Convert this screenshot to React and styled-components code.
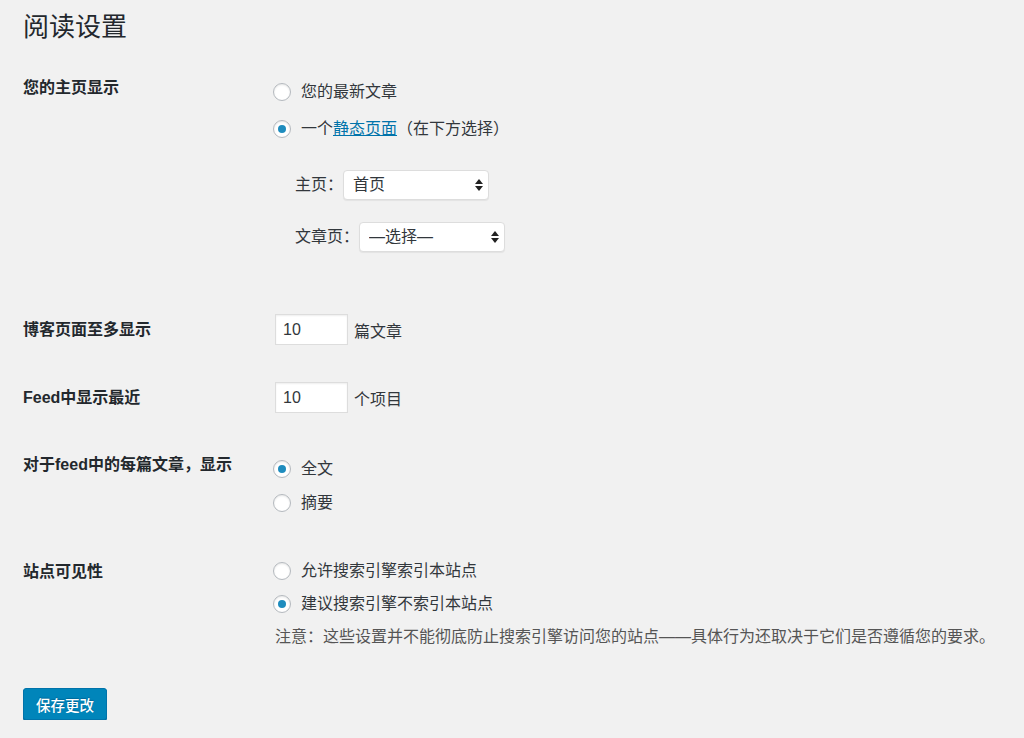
import styled, { createGlobalStyle } from "styled-components";

const GlobalStyle = createGlobalStyle`
  body {
    margin: 0;
    background: #f1f1f1;
    color: #23282d;
    font-family: "Liberation Sans", "Noto Sans CJK SC", sans-serif;
    font-size: 16px;
  }
`;

const Page = styled.div`
  padding: 10px 0 0 23px;
`;

const Title = styled.h1`
  margin: 0;
  font-size: 26px;
  font-weight: 400;
  line-height: 34px;
  color: #23282d;
`;

const Row = styled.div`
  display: grid;
  grid-template-columns: 250px 1fr;
`;

const Th = styled.div`
  padding-top: ${(p) => p.$top}px;
  font-weight: 700;
  line-height: 22px;
  color: #23282d;
`;

const Td = styled.div`
  padding-top: ${(p) => p.$top}px;
  padding-bottom: ${(p) => p.$bottom}px;
  color: #32373c;
`;

const Options = styled.div`
  display: flex;
  flex-direction: column;
  gap: ${(p) => p.$gap}px;
`;

const Option = styled.label`
  display: flex;
  align-items: center;
  height: 22px;
  line-height: 22px;
`;

const Radio = styled.input.attrs({ type: "radio", readOnly: true })`
  appearance: none;
  margin: 0 10px 0 0;
  width: 18px;
  height: 18px;
  border: 1px solid #b4b9be;
  border-radius: 50%;
  background: #fff;
  box-shadow: inset 0 1px 2px rgba(0, 0, 0, 0.1);
  box-sizing: border-box;
  display: flex;
  align-items: center;
  justify-content: center;

  &:checked::before {
    content: "";
    width: 8px;
    height: 8px;
    border-radius: 50%;
    background: #1e8cbe;
  }
`;

const TextLink = styled.a`
  color: #0073aa;
  text-decoration: underline;
`;

const SubFields = styled.div`
  display: flex;
  flex-direction: column;
  gap: 22px;
  margin-top: 30px;
  padding-left: 22px;
`;

const SubField = styled.div`
  display: flex;
  align-items: center;
  line-height: 22px;
`;

const SelectWrap = styled.div`
  position: relative;
  width: 146px;
  height: 30px;
`;

const Select = styled.select`
  appearance: none;
  width: 100%;
  height: 100%;
  box-sizing: border-box;
  margin: 0;
  padding: 0 24px 0 9px;
  border: 1px solid #ddd;
  border-radius: 4px;
  background: #fff;
  box-shadow: 0 1px 1px rgba(0, 0, 0, 0.06);
  font: inherit;
  font-size: 16px;
  color: #32373c;
`;

const Arrows = styled.svg`
  position: absolute;
  right: 5px;
  top: 8px;
  pointer-events: none;
`;

const NumberLine = styled.div`
  display: flex;
  align-items: center;
`;

const NumberInput = styled.input.attrs({ type: "text", readOnly: true })`
  width: 73px;
  height: 31px;
  box-sizing: border-box;
  margin: 0 6px 0 2px;
  padding: 0 7px;
  border: 1px solid #ddd;
  background: #fff;
  box-shadow: inset 0 1px 2px rgba(0, 0, 0, 0.07);
  font: inherit;
  font-size: 16px;
  color: #32373c;
`;

const Note = styled.p`
  margin: 0;
  padding-left: 2px;
  line-height: 22px;
  color: #555;
`;

const Submit = styled.div`
  padding-top: 25px;
`;

const Button = styled.button`
  height: 32px;
  padding: 0 12px;
  border: 1px solid #0073aa;
  border-radius: 3px;
  background: #0085ba;
  box-shadow: 0 1px 0 #006799;
  color: #fff;
  font-family: "Liberation Sans", "Noto Sans CJK SC", sans-serif;
  font-size: 14.5px;
  font-weight: 500;
  text-shadow: 0 -1px 1px #006799;
  cursor: pointer;
`;

function SelectBox({ value }) {
  return (
    <SelectWrap>
      <Select defaultValue={value}>
        <option>{value}</option>
      </Select>
      <Arrows width="10" height="14" viewBox="0 0 10 14">
        <path d="M5 1 L9 6 L1 6 Z" fill="#222" />
        <path d="M1 8 L9 8 L5 13 Z" fill="#222" />
      </Arrows>
    </SelectWrap>
  );
}

export default function App() {
  return (
    <>
      <GlobalStyle />
      <Page>
        <Title>阅读设置</Title>

        <Row>
          <Th $top={33}>您的主页显示</Th>
          <Td $top={37} $bottom={44}>
            <Options $gap={15}>
              <Option>
                <Radio name="front" />
                您的最新文章
              </Option>
              <Option>
                <Radio name="front" defaultChecked />
                一个<TextLink href="#">静态页面</TextLink>（在下方选择）
              </Option>
            </Options>
            <SubFields>
              <SubField>
                主页：<SelectBox value="首页" />
              </SubField>
              <SubField>
                文章页：<SelectBox value="—选择—" />
              </SubField>
            </SubFields>
          </Td>
        </Row>

        <Row>
          <Th $top={23}>博客页面至多显示</Th>
          <Td $top={18} $bottom={19}>
            <NumberLine>
              <NumberInput defaultValue="10" />
              篇文章
            </NumberLine>
          </Td>
        </Row>

        <Row>
          <Th $top={23}>Feed中显示最近</Th>
          <Td $top={18} $bottom={19}>
            <NumberLine>
              <NumberInput defaultValue="10" />
              个项目
            </NumberLine>
          </Td>
        </Row>

        <Row>
          <Th $top={22}>对于feed中的每篇文章，显示</Th>
          <Td $top={26} $bottom={24}>
            <Options $gap={12}>
              <Option>
                <Radio name="feed" defaultChecked />
                全文
              </Option>
              <Option>
                <Radio name="feed" />
                摘要
              </Option>
            </Options>
          </Td>
        </Row>

        <Row>
          <Th $top={23}>站点可见性</Th>
          <Td $top={22} $bottom={15}>
            <Options $gap={11}>
              <Option>
                <Radio name="blog" />
                允许搜索引擎索引本站点
              </Option>
              <Option>
                <Radio name="blog" defaultChecked />
                建议搜索引擎不索引本站点
              </Option>
              <Note>
                注意：这些设置并不能彻底防止搜索引擎访问您的站点——具体行为还取决于它们是否遵循您的要求。
              </Note>
            </Options>
          </Td>
        </Row>

        <Submit>
          <Button>保存更改</Button>
        </Submit>
      </Page>
    </>
  );
}
